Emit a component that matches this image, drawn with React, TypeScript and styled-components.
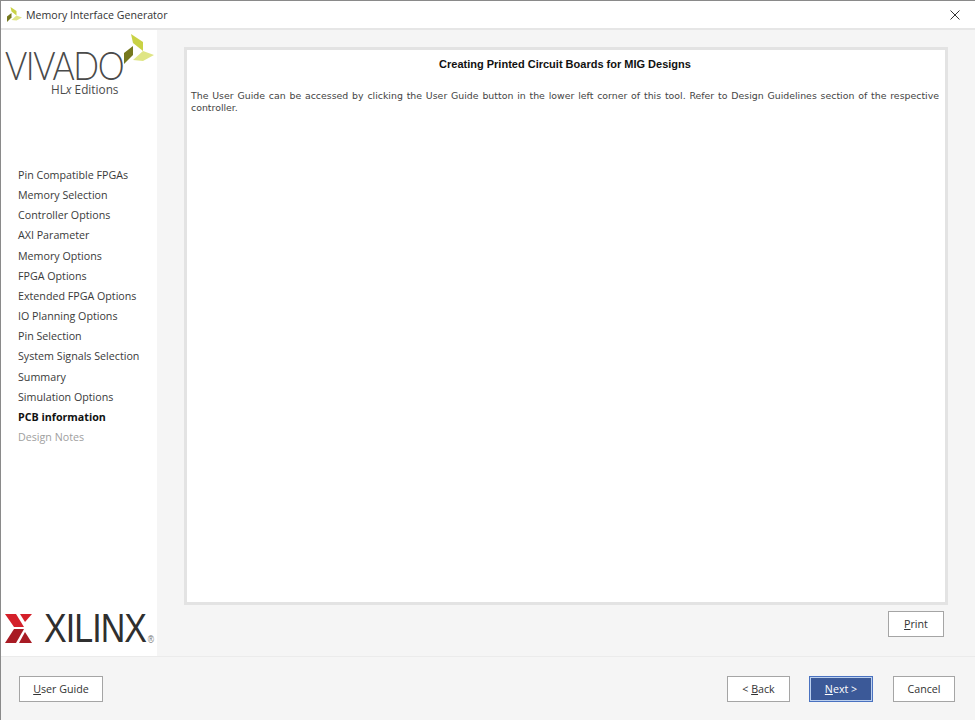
import styled, { createGlobalStyle } from "styled-components";

const GlobalStyle = createGlobalStyle`
    html, body {
        margin: 0;
        padding: 0;
        background: #f5f5f5;
    }
`;

const Window = styled.div`
    width: 975px;
    height: 720px;
    box-sizing: border-box;
    display: flex;
    flex-direction: column;
    overflow: hidden;
    background: #f5f5f5;
    border-top: 1px solid #8a8a8a;
    border-left: 1px solid #8a8a8a;
    font-family: "Open Sans", "Noto Sans", sans-serif;
    color: #333;
`;

const TitleBar = styled.div`
    height: 27px;
    flex: none;
    display: flex;
    align-items: center;
    background: #fff;
    border-bottom: 2px solid #e6e6e6;
    padding: 0 15px 0 6px;
    gap: 4px;
`;

const TitleText = styled.span`
    flex: 1;
    font-size: 10.6px;
    color: #333;
`;

const Main = styled.div`
    flex: 1;
    display: flex;
    min-height: 0;
`;

const Sidebar = styled.aside`
    width: 156px;
    flex: none;
    display: flex;
    flex-direction: column;
    background: #fff;
`;

const VivadoLogo = styled.div`
    height: 134.8px;
    flex: none;
    box-sizing: border-box;
    position: relative;
    padding: 18px 0 0 4px;
`;

const VivadoLeaf = styled.div`
    position: absolute;
    left: 123px;
    top: 4px;
`;

const VivadoWord = styled.div`
    font-family: Lato, "Liberation Sans", sans-serif;
    font-weight: 300;
    font-size: 39px;
    line-height: 34px;
    letter-spacing: -1.6px;
    color: #4a4a4a;
    transform: scaleX(0.87);
    transform-origin: left top;
`;

const Editions = styled.div`
    font-size: 11.8px;
    line-height: 14px;
    margin: 0 0 0 46px;
    color: #4a4a4a;
`;

const NavList = styled.nav`
    display: flex;
    flex-direction: column;
    padding-left: 17px;
`;

const NavItem = styled.div<{ $state?: "active" | "disabled" }>`
    height: 20.2px;
    line-height: 20.2px;
    font-size: 10.7px;
    white-space: nowrap;
    font-weight: ${p => (p.$state === "active" ? 700 : 400)};
    color: ${p => (p.$state === "active" ? "#111" : p.$state === "disabled" ? "#a0a0a0" : "#3a3a3a")};
`;

const XilinxLogo = styled.div`
    margin-top: auto;
    height: 42px;
    flex: none;
    box-sizing: border-box;
    display: flex;
    align-items: flex-start;
    padding-left: 4px;
    gap: 12px;
`;

const XilinxMark = styled.svg`
    flex: none;
`;

const XilinxWord = styled.div`
    font-family: "Liberation Sans", sans-serif;
    font-size: 40px;
    line-height: 29px;
    letter-spacing: -1.1px;
    transform: scaleX(0.85);
    transform-origin: left top;
    color: #2f2f2f;
    white-space: nowrap;

    sup {
        font-size: 10px;
        letter-spacing: 0;
        color: #777;
        vertical-align: -1px;
        line-height: 0;
        margin-left: 2px;
    }
`;

const Content = styled.main`
    flex: 1;
    display: flex;
    flex-direction: column;
    align-items: stretch;
    padding: 17px 27px 0 27px;
    min-width: 0;
`;

const Panel = styled.section`
    height: 558px;
    flex: none;
    box-sizing: border-box;
    background: #fff;
    border: 3px solid #e3e3e3;
    padding: 7px 6px 7px 4px;
    font-family: "DejaVu Sans", Verdana, sans-serif;
    color: #333;
`;

const PanelTitle = styled.h1`
    margin: 0 0 19px;
    text-align: center;
    font-family: "Liberation Sans", sans-serif;
    font-size: 11px;
    line-height: 14px;
    font-weight: 700;
    color: #111;
`;

const PanelBody = styled.p`
    margin: 0;
    font-size: 9.4px;
    line-height: 12px;
    text-align: justify;
    color: #444;
`;

const PrintRow = styled.div`
    display: flex;
    justify-content: flex-end;
    padding: 6px 4px 0 0;
`;

const Footer = styled.footer`
    height: 64px;
    flex: none;
    box-sizing: border-box;
    border-top: 1px solid #ebebeb;
    display: flex;
    align-items: flex-start;
    padding: 19px 20px 0 18px;
`;

const Spacer = styled.div`
    flex: 1;
`;

const Button = styled.button<{ $width: number; $primary?: boolean }>`
    width: ${p => p.$width}px;
    height: 26px;
    box-sizing: border-box;
    padding: 0;
    font-family: "Open Sans", "Noto Sans", sans-serif;
    font-size: 10.7px;
    background: ${p => (p.$primary ? "#3b5998" : "#fff")};
    color: ${p => (p.$primary ? "#fff" : "#333")};
    border: 1px solid ${p => (p.$primary ? "#4a72c0" : "#a5a5a5")};
    outline: ${p => (p.$primary ? "1px solid #bcd0ee" : "none")};
    outline-offset: -2px;
    margin-left: ${p => (p.$primary ? 19 : 0)}px;
    margin-right: ${p => (p.$primary ? 20 : 0)}px;

    u {
        text-underline-offset: 1px;
    }
`;

const Close = styled.svg`
    flex: none;
`;

function LeafMark({ size }: { size: number }) {
    return (
        <svg width={size} height={size} viewBox="0 0 30 30">
            <polygon points="7,0 19,8 19,17 9,9" fill="#c9d245" />
            <polygon points="9,12 9,21 0,30 0,19" fill="#75781e" />
            <polygon points="9,26 19,17 30,21 19,27" fill="#dfe585" />
        </svg>
    );
}

function App() {
    const steps = [
        "Pin Compatible FPGAs",
        "Memory Selection",
        "Controller Options",
        "AXI Parameter",
        "Memory Options",
        "FPGA Options",
        "Extended FPGA Options",
        "IO Planning Options",
        "Pin Selection",
        "System Signals Selection",
        "Summary",
        "Simulation Options",
    ];

    return (
        <>
            <GlobalStyle />
            <Window>
                <TitleBar>
                    <LeafMark size={15} />
                    <TitleText>Memory Interface Generator</TitleText>
                    <Close width="10" height="10" viewBox="0 0 10 10">
                        <path d="M0.5 0.5 L9.5 9.5 M9.5 0.5 L0.5 9.5" stroke="#333" strokeWidth="1" fill="none" />
                    </Close>
                </TitleBar>
                <Main>
                    <Sidebar>
                        <VivadoLogo>
                            <VivadoLeaf><LeafMark size={30} /></VivadoLeaf>
                            <VivadoWord>VIVADO</VivadoWord>
                            <Editions>HL<i>x</i> Editions</Editions>
                        </VivadoLogo>
                        <NavList>
                            {steps.map(s => (
                                <NavItem key={s}>{s}</NavItem>
                            ))}
                            <NavItem $state="active">PCB information</NavItem>
                            <NavItem $state="disabled">Design Notes</NavItem>
                        </NavList>
                        <XilinxLogo>
                            <XilinxMark width="27" height="29" viewBox="0 0 27 29">
                                <polygon points="0,0 11,0 19,13 9,13" fill="#d4202a" />
                                <polygon points="9,15 19,15 11,29 0,29" fill="#a81b24" />
                                <polygon points="15,0 27,0 20,8" fill="#d4202a" />
                                <polygon points="20,18 27,29 14,29" fill="#a81b24" />
                            </XilinxMark>
                            <XilinxWord>XILINX<sup>®</sup></XilinxWord>
                        </XilinxLogo>
                    </Sidebar>
                    <Content>
                        <Panel>
                            <PanelTitle>Creating Printed Circuit Boards for MIG Designs</PanelTitle>
                            <PanelBody>
                                The User Guide can be accessed by clicking the User Guide button in the lower left corner
                                of this tool. Refer to Design Guidelines section of the respective controller.
                            </PanelBody>
                        </Panel>
                        <PrintRow>
                            <Button $width={56}><u>P</u>rint</Button>
                        </PrintRow>
                    </Content>
                </Main>
                <Footer>
                    <Button $width={84}><u>U</u>ser Guide</Button>
                    <Spacer />
                    <Button $width={63}>&lt; <u>B</u>ack</Button>
                    <Button $width={64} $primary><u>N</u>ext &gt;</Button>
                    <Button $width={62}>Cancel</Button>
                </Footer>
            </Window>
        </>
    );
}

export default App;
